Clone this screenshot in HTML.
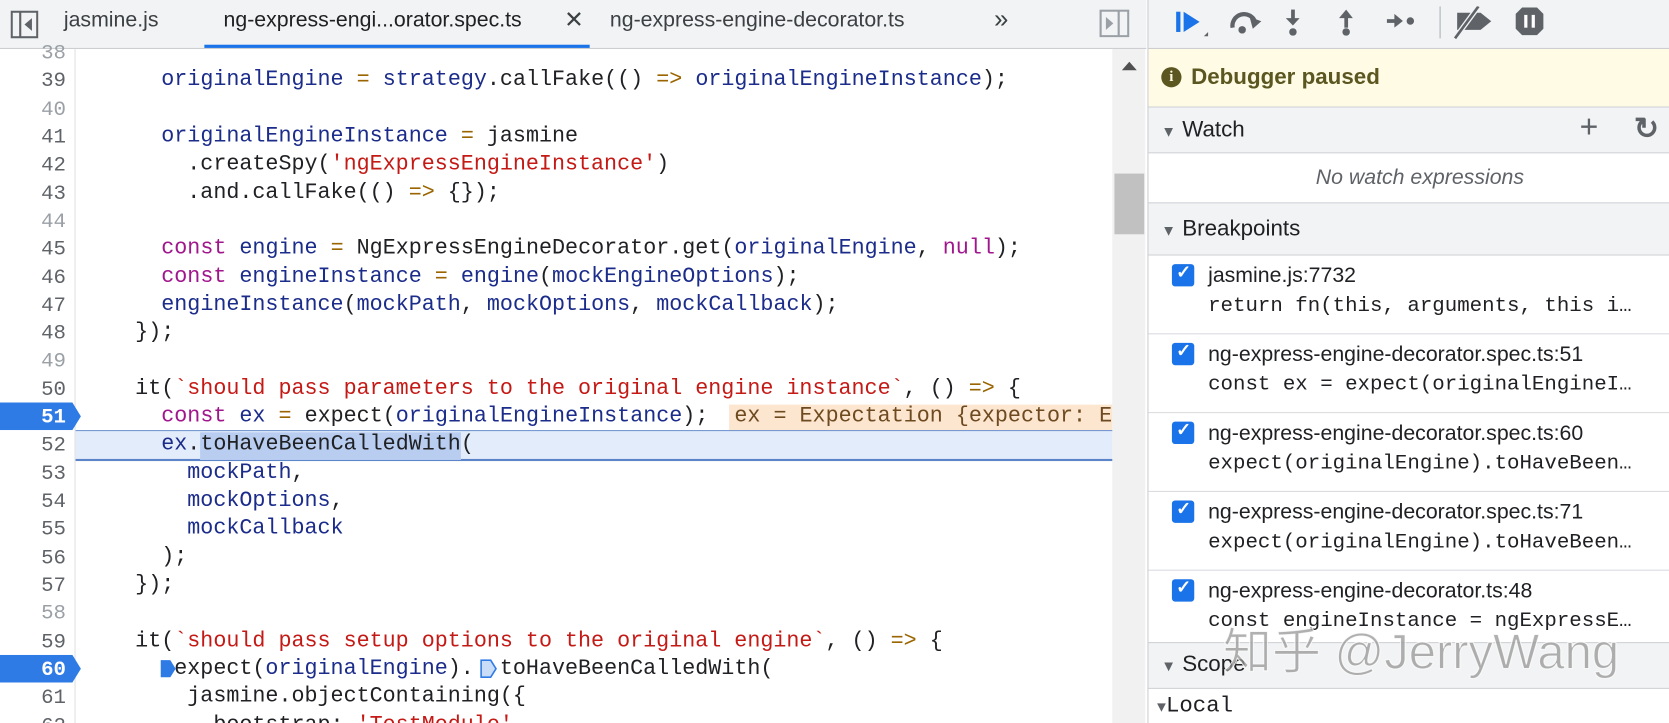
<!DOCTYPE html>
<html><head><meta charset="utf-8"><style>
html,body{margin:0;padding:0;width:1669px;height:723px;overflow:hidden;background:#fff}
#r{position:absolute;left:0;top:0;width:1568px;height:679px;transform:scale(1.0644,1.0648);transform-origin:0 0;font-family:"Liberation Sans",sans-serif;overflow:hidden}
.a{position:absolute}
.tabs{left:0;top:0;width:1077px;height:45px;background:#f1f3f4;border-bottom:1px solid #cbcdd1}
.tab{top:8px;font-size:20px;color:#3c4043;white-space:nowrap}
.code{font-family:"Liberation Mono",monospace;font-size:20.4px;white-space:pre;color:#202124}
.ln{left:0;width:62px;text-align:right;font-family:"Liberation Mono",monospace;font-size:19.5px;color:#5f6368}
.k{color:#a0168c}.v{color:#1b2c8a}.s{color:#c41a16}.o{color:#9a6500}
.rp{left:1078px;top:0;width:490px;height:679px;border-left:1px solid #cbcdd1;background:#fff}
.hdr{left:0;width:490px;background:#f1f3f4;border-bottom:1px solid #d0d3d6;border-top:1px solid #d0d3d6;font-size:21px;color:#202124}
.bp{left:0;width:490px;height:73px;border-bottom:1px solid #d9dbde}
.cb{left:22px;top:8px;width:21px;height:21px;background:#1a73e8;border-radius:3px}
.bpt{left:56px;top:8px;font-size:20px;color:#202124;white-space:nowrap}
.bpc{left:56px;top:36px;font-family:"Liberation Mono",monospace;font-size:19.5px;color:#202124;white-space:pre}
</style></head><body><div id="r">
<div class="a tabs"></div>
<svg class="a" style="left:10px;top:10px" width="26" height="26" viewBox="0 0 26 26"><rect x="1" y="1" width="24" height="24" fill="none" stroke="#5f6368" stroke-width="2"/><line x1="9" y1="1" x2="9" y2="25" stroke="#5f6368" stroke-width="2"/><path d="M20 7 L13 13 L20 19Z" fill="#5f6368"/></svg>
<div class="a tab" style="left:60px">jasmine.js</div>
<div class="a tab" style="left:210px;color:#202124">ng-express-engi...orator.spec.ts</div>
<div class="a tab" style="left:530px;font-size:22px;top:6px">✕</div>
<div class="a" style="left:192px;top:42px;width:362px;height:3px;background:#1a73e8"></div>
<div class="a tab" style="left:573px">ng-express-engine-decorator.ts</div>
<div class="a tab" style="left:934px;font-size:24px;top:5px">»</div>
<svg class="a" style="left:1033px;top:9px" width="28" height="26" viewBox="0 0 28 26"><rect x="1" y="1" width="26" height="24" fill="none" stroke="#9aa0a6" stroke-width="2"/><line x1="18" y1="1" x2="18" y2="25" stroke="#9aa0a6" stroke-width="2"/><path d="M6 7 L13 13 L6 19Z" fill="#9aa0a6"/></svg>
<div class="a" style="left:1045px;top:46px;width:31px;height:633px;background:#f1f1f1"></div>
<div class="a" style="left:1047px;top:163px;width:28px;height:57px;background:#c1c1c1"></div>
<div class="a" style="left:1054px;top:58px;width:0;height:0;border-left:7px solid transparent;border-right:7px solid transparent;border-bottom:8px solid #505050"></div>
<div class="a" style="left:70px;top:46px;width:1px;height:633px;background:#e0e0e0"></div>
<div class="a" style="left:685px;top:380px;width:360px;height:24px;background:#fde6cf"></div>
<div class="a" style="left:71px;top:404px;width:974px;height:1px;background:#5b84c9"></div>
<div class="a" style="left:71px;top:405px;width:974px;height:26px;background:#e3ecfb"></div>
<div class="a" style="left:71px;top:431px;width:974px;height:2px;background:#5b84c9"></div>
<div class="a" style="left:188px;top:406px;width:245px;height:26px;background:#b9cdf1"></div>
<svg class="a" style="left:0;top:378px" width="78" height="26"><path d="M0 0H68L76 13L68 26H0Z" fill="#2f7be6"/></svg>
<svg class="a" style="left:0;top:615px" width="78" height="26"><path d="M0 0H68L76 13L68 26H0Z" fill="#2f7be6"/></svg>
<div class="a ln" style="top:37px;line-height:26.32px"><span style="color:#9aa0a6">38</span><br>39<br><span style="color:#9aa0a6">40</span><br>41<br>42<br>43<br><span style="color:#9aa0a6">44</span><br>45<br>46<br>47<br>48<br><span style="color:#9aa0a6">49</span><br>50<br><b style="color:#fff">51</b><br>52<br>53<br>54<br>55<br>56<br>57<br><span style="color:#9aa0a6">58</span><br>59<br><b style="color:#fff">60</b><br>61<br>62</div>
<div class="a code" style="left:127px;top:37px;line-height:26.32px">
  <span class="v">originalEngine</span> <span class="o">=</span> <span class="v">strategy</span>.callFake(() <span class="o">=&gt;</span> <span class="v">originalEngineInstance</span>);

  <span class="v">originalEngineInstance</span> <span class="o">=</span> jasmine
    .createSpy(<span class="s">'ngExpressEngineInstance'</span>)
    .and.callFake(() <span class="o">=&gt;</span> {});

  <span class="k">const</span> <span class="v">engine</span> <span class="o">=</span> NgExpressEngineDecorator.get(<span class="v">originalEngine</span>, <span class="k">null</span>);
  <span class="k">const</span> <span class="v">engineInstance</span> <span class="o">=</span> <span class="v">engine</span>(<span class="v">mockEngineOptions</span>);
  <span class="v">engineInstance</span>(<span class="v">mockPath</span>, <span class="v">mockOptions</span>, <span class="v">mockCallback</span>);
});

it(<span class="s">`should pass parameters to the original engine instance`</span>, () <span class="o">=&gt;</span> {
  <span class="k">const</span> <span class="v">ex</span> <span class="o">=</span> expect(<span class="v">originalEngineInstance</span>);  <span style="color:#6d4a1f">ex = Expectation {expector: E</span>
  <span class="v">ex</span>.toHaveBeenCalledWith(
    <span class="v">mockPath</span>,
    <span class="v">mockOptions</span>,
    <span class="v">mockCallback</span>
  );
});

it(<span class="s">`should pass setup options to the original engine`</span>, () <span class="o">=&gt;</span> {
   expect(<span class="v">originalEngine</span>).  toHaveBeenCalledWith(
    jasmine.objectContaining({
      bootstrap: <span class="s">'TestModule'</span>,</div>
<svg class="a" style="left:150px;top:619px" width="16" height="18"><path d="M1 1H10L15 9L10 17H1Z" fill="#2f7be6"/></svg>
<svg class="a" style="left:451px;top:619px" width="16" height="18"><path d="M1 1H10L15 9L10 17H1Z" fill="#c9dcf8" stroke="#2f7be6" stroke-width="1.5"/></svg>
<div class="a rp">
 <div class="a" style="left:0;top:0;width:490px;height:45px;background:#f1f3f4;border-bottom:1px solid #cbcdd1"></div>
 <svg class="a" style="left:18px;top:6px" width="380" height="36" viewBox="0 0 380 36">
  <rect x="8" y="5" width="4" height="19" fill="#1a73e8"/><path d="M15 5 L30 14.5 L15 24Z" fill="#1a73e8"/><path d="M34 28 L38 28 L38 24Z" fill="#5f6368"/>
  <path d="M61 20 A11 11 0 0 1 82 14" fill="none" stroke="#5f6368" stroke-width="4"/><path d="M77 10 L88 14 L80 21Z" fill="#5f6368"/><circle cx="70" cy="22" r="3.5" fill="#5f6368"/>
  <rect x="116" y="3" width="3.5" height="10" fill="#5f6368"/><path d="M111 11 L124 11 L117.7 18Z" fill="#5f6368"/><circle cx="117.7" cy="24" r="3.5" fill="#5f6368"/>
  <rect x="166" y="10" width="3.5" height="10" fill="#5f6368"/><path d="M161 11 L174 11 L167.7 3Z" fill="#5f6368"/><circle cx="167.7" cy="24" r="3.5" fill="#5f6368"/>
  <rect x="206" y="12" width="9" height="3.5" fill="#5f6368"/><path d="M213 7 L221 13.7 L213 20Z" fill="#5f6368"/><circle cx="228" cy="13.7" r="3.5" fill="#5f6368"/>
  <line x1="256" y1="0" x2="256" y2="30" stroke="#c4c7ca" stroke-width="1.5"/>
  <path d="M272 6 H294 L304 14 L294 22 H272Z" fill="#5f6368"/><line x1="270" y1="30" x2="292" y2="0" stroke="#f1f3f4" stroke-width="5"/><line x1="270" y1="30" x2="292" y2="0" stroke="#5f6368" stroke-width="2.5"/>
  <path d="M333 1 H347 L353 7 V21 L347 27 H333 L327 21 V7Z" fill="#5f6368"/><rect x="335" y="8" width="3" height="12" fill="#fff"/><rect x="342" y="8" width="3" height="12" fill="#fff"/>
 </svg>
 <div class="a" style="left:0;top:46px;width:490px;height:54px;background:#fffbe5;border-bottom:1px solid #d6d6d0"></div>
 <div class="a" style="left:12px;top:63px;width:19px;height:19px;border-radius:50%;background:#5c5621;color:#fffbe5;font:bold 14px 'Liberation Serif',serif;text-align:center;line-height:19px">i</div>
 <div class="a" style="left:40px;top:61px;font-size:21px;font-weight:bold;color:#5c5621">Debugger paused</div>
 <div class="a hdr" style="top:100px;height:42px"></div>
 <div class="a" style="left:12px;top:110px;font-size:21px;color:#202124"><span style="font-size:14px;color:#5f6368">▼</span> Watch</div>
 <div class="a" style="left:405px;top:103px;font-size:30px;color:#5f6368">+</div>
 <div class="a" style="left:456px;top:104px;font-size:28px;color:#5f6368;font-weight:bold">↻</div>
 <div class="a" style="left:0;top:156px;width:490px;text-align:center;font-size:20px;font-style:italic;color:#5f6368;padding-left:10px">No watch expressions</div>
 <div class="a hdr" style="top:190px;height:48px"></div>
 <div class="a" style="left:12px;top:203px;font-size:21px;color:#202124"><span style="font-size:14px;color:#5f6368">▼</span> Breakpoints</div>
 <div class="a bp" style="top:240px"><div class="a cb"></div><div class="a" style="left:26px;top:6px;color:#fff;font-size:17px;font-weight:bold">✓</div><div class="a bpt">jasmine.js:7732</div><div class="a bpc">return fn(this, arguments, this i…</div></div>
 <div class="a bp" style="top:314px"><div class="a cb"></div><div class="a" style="left:26px;top:6px;color:#fff;font-size:17px;font-weight:bold">✓</div><div class="a bpt">ng-express-engine-decorator.spec.ts:51</div><div class="a bpc">const ex = expect(originalEngineI…</div></div>
 <div class="a bp" style="top:388px"><div class="a cb"></div><div class="a" style="left:26px;top:6px;color:#fff;font-size:17px;font-weight:bold">✓</div><div class="a bpt">ng-express-engine-decorator.spec.ts:60</div><div class="a bpc">expect(originalEngine).toHaveBeen…</div></div>
 <div class="a bp" style="top:462px"><div class="a cb"></div><div class="a" style="left:26px;top:6px;color:#fff;font-size:17px;font-weight:bold">✓</div><div class="a bpt">ng-express-engine-decorator.spec.ts:71</div><div class="a bpc">expect(originalEngine).toHaveBeen…</div></div>
 <div class="a bp" style="top:536px;height:67px"><div class="a cb"></div><div class="a" style="left:26px;top:6px;color:#fff;font-size:17px;font-weight:bold">✓</div><div class="a bpt">ng-express-engine-decorator.ts:48</div><div class="a bpc">const engineInstance = ngExpressE…</div></div>
 <div class="a hdr" style="top:603px;height:42px"></div>
 <div class="a" style="left:12px;top:612px;font-size:21px;color:#202124"><span style="font-size:14px;color:#5f6368">▼</span> Scope</div>
 <div class="a" style="left:8px;top:652px;font-size:21px;font-family:'Liberation Mono',monospace;color:#202124"><span style="font-size:14px;color:#5f6368">▼</span>Local</div>
 <div class="a" style="left:70px;top:576px;font-size:46px;color:rgba(150,150,150,0.75);font-family:'Liberation Sans','Noto Sans CJK SC',sans-serif;-webkit-text-stroke:1px rgba(255,255,255,0.8);white-space:nowrap">知乎 @JerryWang</div>
</div>
</div></body></html>
